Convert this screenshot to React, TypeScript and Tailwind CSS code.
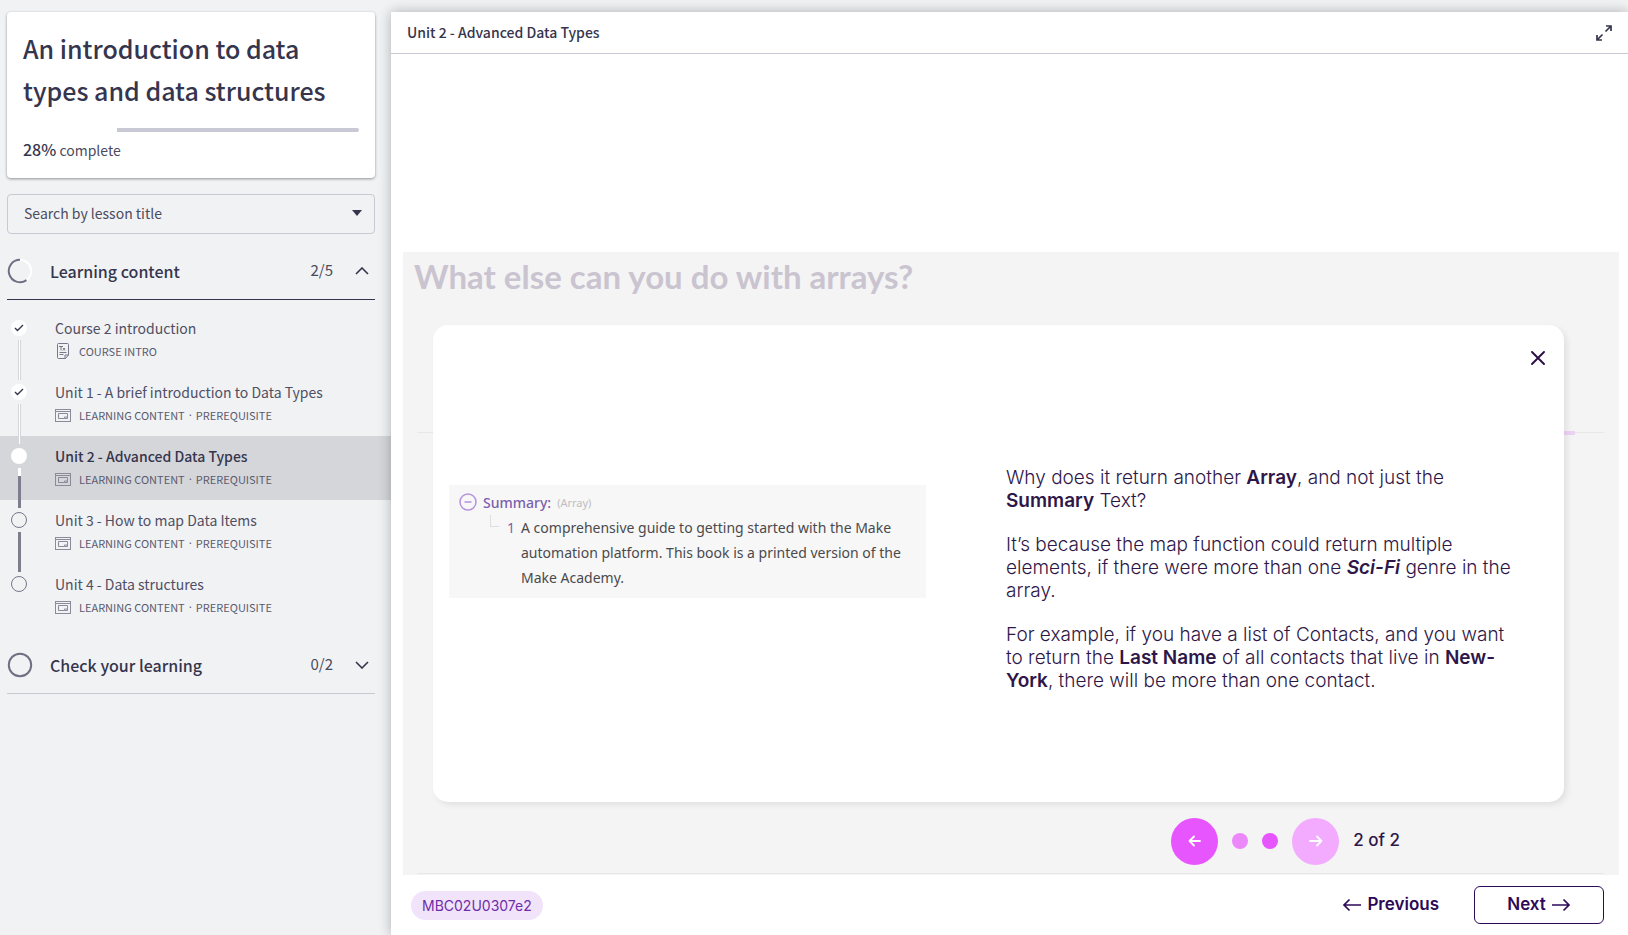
import React from "react";

const RAIL = {
  none: "bg-transparent",
  done: "border-x border-[#d6d6db] bg-white",
  white: "bg-white",
  todo: "bg-[#7d7d8e]",
};

type Rail = keyof typeof RAIL;

interface Lesson {
  title: string;
  meta: string[];
  state: "done" | "current" | "todo";
  icon: "text" | "content";
  above: Rail;
  below: Rail;
}

const REQUIRED = ["LEARNING CONTENT", "PREREQUISITE"];

const lessons: Lesson[] = [
  { title: "Course 2 introduction", meta: ["COURSE INTRO"], state: "done", icon: "text", above: "none", below: "done" },
  { title: "Unit 1 - A brief introduction to Data Types", meta: REQUIRED, state: "done", icon: "content", above: "done", below: "done" },
  { title: "Unit 2 - Advanced Data Types", meta: REQUIRED, state: "current", icon: "content", above: "done", below: "todo" },
  { title: "Unit 3 - How to map Data Items", meta: REQUIRED, state: "todo", icon: "content", above: "todo", below: "todo" },
  { title: "Unit 4 - Data structures", meta: REQUIRED, state: "todo", icon: "content", above: "todo", below: "none" },
];

function TextIcon() {
  return (
    <svg width="16" height="16" viewBox="0 0 16 16" fill="none" stroke="#77778a" strokeWidth="1">
      <path d="M10.500 15.500h-7a1 1 0 0 1-1-1v-13a1 1 0 0 1 1-1h9a1 1 0 0 1 1 1v10.500zM10 15.500v-3.500h3.500" />
      <path d="M4 3.500h4M6 3.500v4M8 5l2 2.500M10 5L8 7.500M4.500 9.500h7M4.500 11.500h4" />
    </svg>
  );
}

function ContentIcon() {
  return (
    <svg width="16" height="13" viewBox="0 0 16 13" fill="none" stroke="#8a8a9a" strokeWidth="1">
      <rect x="0.5" y="0.5" width="15" height="12" />
      <path d="M0.500 2.500h15" />
      <path d="M9.500 9.500h-6v-5h9v5h-3v-1.500h3" />
    </svg>
  );
}

function Chevron({ up = false }: { up?: boolean }) {
  return (
    <svg width="14" height="8" viewBox="0 0 14 8" fill="none" stroke="#35354d" strokeWidth="1.600">
      <path d={up ? "M1 7l6-6 6 6" : "M1 1l6 6 6-6"} />
    </svg>
  );
}

function Marker({ state }: { state: Lesson["state"] }) {
  if (state === "todo") {
    return <span className="size-4 shrink-0 rounded-full border border-[#77778a]" />;
  }
  return (
    <span className="flex size-4 shrink-0 items-center justify-center rounded-full bg-white">
      {state === "done" && (
        <svg width="10" height="8" viewBox="0 0 10 8" fill="none" stroke="#35354d" strokeWidth="1.400">
          <path d="M1 4l2.500 2.500L9 1" />
        </svg>
      )}
    </span>
  );
}

function Arrow({ left = false, size = "long" }: { left?: boolean; size?: "long" | "short" }) {
  if (size === "short") {
    return (
      <svg width="14" height="12" viewBox="0 0 14 12" fill="none" stroke="currentColor" strokeWidth="1.800" strokeLinecap="round" strokeLinejoin="round">
        <path d={left ? "M12 6H1.500M6 1.500L1.500 6 6 10.500" : "M1 6h11.500M8 1.500L12.500 6 8 10.500"} />
      </svg>
    );
  }
  return (
    <svg width="20" height="14" viewBox="0 0 20 14" fill="none" stroke="currentColor" strokeWidth="1.700">
      <path d={left ? "M19 7H2M7.500 1.500L2 7l5.500 5.500" : "M1 7h17M12.500 1.500L18 7l-5.500 5.500"} />
    </svg>
  );
}

function Sidebar() {
  return (
    <aside className="w-[391px] shrink-0 pt-3 text-[#35354d]">
      <div className="mr-4 ml-[7px] rounded bg-white px-4 pt-[15px] pb-4 shadow-[0_1px_3px_rgba(0,0,0,0.4)]">
        <h1 className="text-[25px] leading-[42px] font-medium">An introduction to data types and data structures</h1>
        <div className="mt-[17px] flex h-1">
          <div className="w-[28%]" />
          <div className="flex-1 rounded-r-full bg-[#c9c9d6]" />
        </div>
        <p className="mt-[5px] text-[14px] leading-6 text-[#4b4b5e]">
          <strong className="text-[16px] font-medium text-[#35354d]">28%</strong> complete
        </p>
      </div>

      <button type="button" className="mt-4 mr-4 ml-[7px] flex h-10 w-[368px] items-center justify-between rounded border border-[#c9c9d6] pr-3 pb-[2px] pl-4 text-[14px] text-[#4b4b5e]">
        Search by lesson title
        <svg width="10" height="6" viewBox="0 0 10 6" fill="#35354d">
          <path d="M0 0h10L5 6z" />
        </svg>
      </button>

      <button type="button" className="mt-2 mr-4 ml-[7px] flex h-[58px] w-[368px] items-center border-b border-[#35354d] pr-[6px] text-left">
        <svg width="26" height="26" viewBox="0 0 26 26" fill="none" strokeWidth="2">
          <circle cx="13" cy="13" r="11.200" stroke="#ffffff" />
          <path d="M13 1.800a11.200 11.200 0 1 0 6.500 20.300" stroke="#6f6f84" />
        </svg>
        <span className="ml-[17px] flex-1 text-[16px] font-medium">Learning content</span>
        <span className="mr-[22px] text-[15px] text-[#4b4b5e]">2/5</span>
        <Chevron up />
      </button>

      <ul className="mt-2">
        {lessons.map((lesson) => (
          <li key={lesson.title} className={lesson.state === "current" ? "bg-[#d5d6da]" : ""}>
            <a href="#lesson" className="flex h-16 gap-7 pl-[11px]">
              <span className="flex w-4 flex-col items-center">
                <span className={`h-2 w-[3px] ${RAIL[lesson.above]}`} />
                <span className="my-1 flex">
                  <Marker state={lesson.state} />
                </span>
                {lesson.state === "current" && <span className="h-2 w-[3px] bg-white" />}
                <span className={`w-[3px] flex-1 ${RAIL[lesson.below]}`} />
              </span>
              <span className="flex flex-col pt-2">
                <span className={lesson.state === "current" ? "text-[14px] leading-6 font-medium text-[#35354d]" : "text-[14px] leading-6 text-[#4f4f64]"}>
                  {lesson.title}
                </span>
                <span className="flex h-[22px] items-center text-[11px] text-[#5a5a6e]">
                  {lesson.icon === "text" ? <TextIcon /> : <ContentIcon />}
                  <span className="ml-2">{lesson.meta[0]}</span>
                  {lesson.meta[1] && (
                    <>
                      <span className="mx-1 font-[Inter,sans-serif]">·</span>
                      <span>{lesson.meta[1]}</span>
                    </>
                  )}
                </span>
              </span>
            </a>
          </li>
        ))}
      </ul>

      <button type="button" className="mt-2 mr-4 ml-[7px] flex h-[58px] w-[368px] items-center border-b border-[#c9c9d6] pr-[6px] text-left">
        <svg width="26" height="26" viewBox="0 0 26 26" fill="none" strokeWidth="2">
          <circle cx="13" cy="13" r="11.200" stroke="#6f6f84" />
        </svg>
        <span className="ml-[17px] flex-1 text-[16px] font-medium">Check your learning</span>
        <span className="mr-[22px] text-[15px] text-[#4b4b5e]">0/2</span>
        <Chevron />
      </button>
    </aside>
  );
}

function OutputSample() {
  return (
    <div className="mt-40 h-[113px] bg-[#f7f7f7] font-['Noto_Sans',sans-serif] text-[14px] leading-[25px] text-[#4a4a4c]">
      <div className="flex h-[30px] items-center pt-1 pl-[10px]">
        <svg width="18" height="18" viewBox="0 0 18 18" fill="none" stroke="#b592e0" strokeWidth="1.500">
          <circle cx="9" cy="9" r="8" />
          <path d="M5.500 9h7" />
        </svg>
        <span className="ml-[6px] font-medium text-[#7c5fae]">Summary:</span>
        <span className="ml-[6px] text-[11px] text-[#bdbdc2]">(Array)</span>
      </div>
      <div className="flex pl-[41px]">
        <span className="h-3 w-[9px] border-b border-l border-[#dedee2]" />
        <span className="ml-2 text-[#7c5fae]">1</span>
        <p className="ml-[6px] flex-1 pr-3">
          A comprehensive guide to getting started with the Make automation platform. This book is a printed version of the Make Academy.
        </p>
      </div>
    </div>
  );
}

function Slide() {
  return (
    <section className="relative mr-[9px] ml-3 flex flex-1 flex-col bg-[#f4f4f4] font-[Inter,sans-serif] text-[#2e1748]">
      <div className="absolute top-[180px] right-[15px] left-[14px] h-px bg-[#e8e8e8]" />
      <div className="absolute top-[179px] right-11 h-1 w-20 bg-[#edd3f3]" />
      <h2 className="h-[73px] pt-[3px] pl-[11px] font-[Lato,sans-serif] text-[33px] leading-[42px] font-bold text-[#cac4d0]">
        What else can you do with arrays?
      </h2>

      <div className="relative mr-[55px] ml-[30px] grid flex-1 grid-cols-[477fr_542fr] items-start gap-20 rounded-[15px] bg-white px-4 shadow-[3px_3px_6px_rgba(0,0,0,0.08)]">
        <button type="button" aria-label="Close" className="absolute top-[23px] right-4 flex size-5 items-center justify-center">
          <svg width="14" height="14" viewBox="0 0 14 14" fill="none" stroke="#2b0f45" strokeWidth="1.900" strokeLinecap="round">
            <path d="M1 1l12 12M13 1L1 13" />
          </svg>
        </button>
        <OutputSample />
        <div className="flex flex-col gap-[21px] pt-[141px] pr-7 text-[19px] leading-[23px] font-light">
          <p>
            Why does it return another <b className="font-semibold">Array</b>, and not just the <b className="font-semibold">Summary</b> Text?
          </p>
          <p>
            It’s because the map function could return multiple elements, if there were more than one{" "}
            <b className="font-semibold italic">Sci-Fi</b> genre in the array.
          </p>
          <p>
            For example, if you have a list of Contacts, and you want to return the <b className="font-semibold">Last Name</b> of all
            contacts that live in <b className="font-semibold">New-York</b>, there will be more than one contact.
          </p>
        </div>
      </div>

      <div className="flex h-[71px] items-center justify-end gap-[14px] pt-[7px] pr-[219px]">
        <button type="button" aria-label="Previous card" className="flex size-[47px] items-center justify-center rounded-full bg-[#e755ff] text-white">
          <Arrow left size="short" />
        </button>
        <span className="size-4 rounded-full bg-[#ed88fb]" />
        <span className="size-4 rounded-full bg-[#e755ff]" />
        <button type="button" aria-label="Next card" className="flex size-[47px] items-center justify-center rounded-full bg-[#f3abff] text-white">
          <Arrow size="short" />
        </button>
        <span className="text-[17px] font-medium">2 of 2</span>
      </div>
      <div className="mr-[15px] mb-px ml-[14px] h-px bg-[#e8e8e8]" />
    </section>
  );
}

export default function App() {
  return (
    <div className="flex min-h-screen bg-[#f1f2f4] font-['Noto_Sans_CJK_SC',sans-serif]">
      <Sidebar />
      <main className="mt-3 flex flex-1 flex-col bg-white shadow-[0_0_12px_rgba(0,0,0,0.28)]">
        <header className="flex h-[42px] items-center justify-between border-b border-[#c9c9d6] pr-4 pl-4 text-[#35354d]">
          <span className="text-[14px] font-medium">Unit 2 - Advanced Data Types</span>
          <button type="button" aria-label="Full screen">
            <svg width="16" height="16" viewBox="0 0 16 16" fill="none" stroke="#35354d" strokeWidth="1.700">
              <path d="M9.500 6.500L15 1M10 1h5v5M6.500 9.500L1 15M1 10v5h5" />
            </svg>
          </button>
        </header>
        <div className="h-[198px]" />
        <Slide />
        <footer className="flex h-[60px] items-center justify-between pr-6 pl-5 font-[Inter,sans-serif]">
          <span className="flex h-[29px] items-center rounded-full bg-[#f0e3fa] px-[11px] text-[14px] text-[#6f2da8]">MBC02U0307e2</span>
          <div className="flex items-center gap-[35px] text-[17px] font-semibold text-[#2d0a57]">
            <button type="button" className="flex items-center gap-[5px]">
              <Arrow left /> Previous
            </button>
            <button type="button" className="flex h-[38px] w-[130px] items-center justify-center gap-[5px] rounded-md border border-[#2d0a57]">
              Next <Arrow />
            </button>
          </div>
        </footer>
      </main>
    </div>
  );
}
